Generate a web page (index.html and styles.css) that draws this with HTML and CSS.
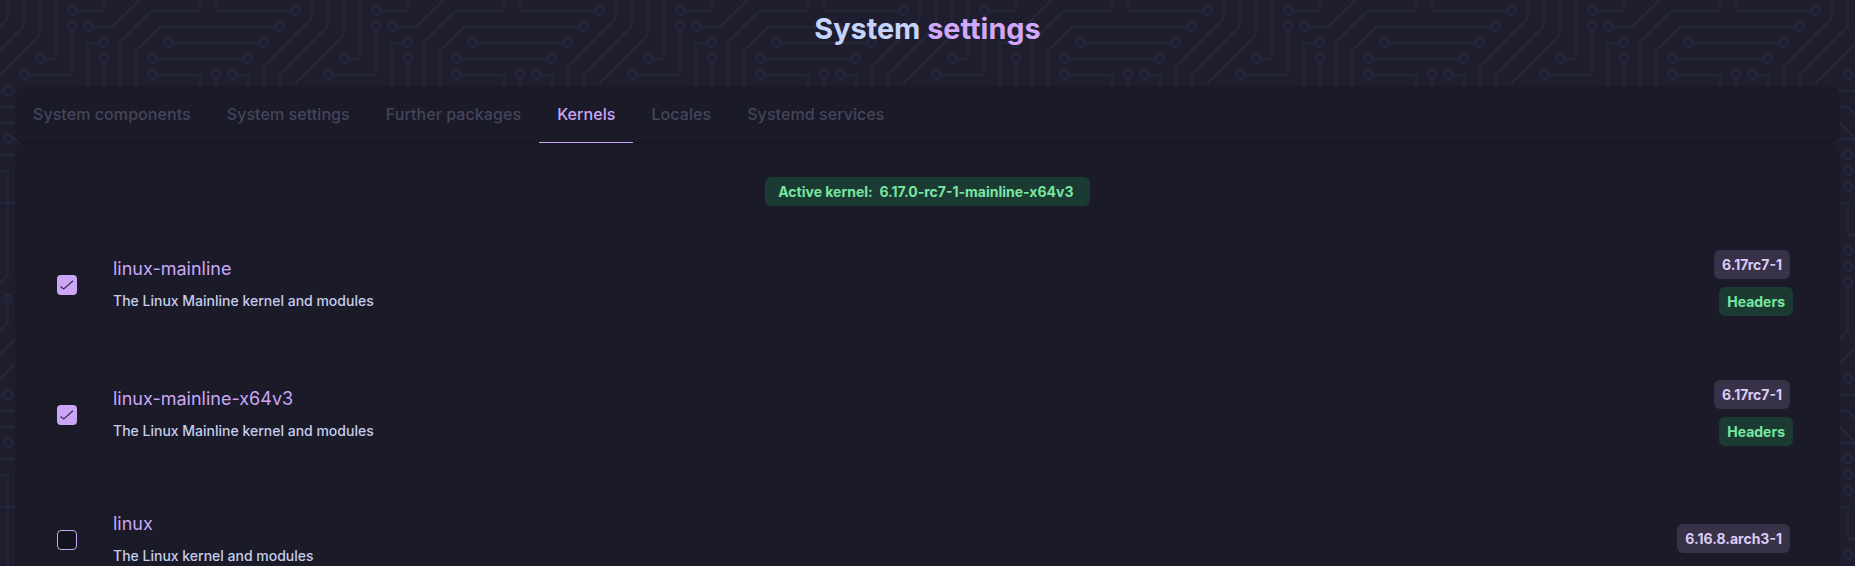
FILE: index.html
```html
<!DOCTYPE html>
<html lang="en">
<head>
  <meta charset="UTF-8" />
  <title>System settings</title>
  <meta name="viewport" content="width=device-width, initial-scale=1.0" />
  <link rel="stylesheet" href="styles.css">
</head>
<body>

<header class="page-head">
  <h1><span class="word-a">System</span> <span class="word-b">settings</span></h1>
</header>

<nav class="tabs">
  <a class="tab">System components</a>
  <a class="tab">System settings</a>
  <a class="tab">Further packages</a>
  <a class="tab active">Kernels</a>
  <a class="tab">Locales</a>
  <a class="tab">Systemd services</a>
</nav>

<main class="panel">
  <div class="active-row">
    <span class="active-kernel">Active kernel:&nbsp; 6.17.0-rc7-1-mainline-x64v3&nbsp;</span>
  </div>

  <section class="kernel">
    <span class="check on">
      <svg viewBox="0 0 20 20" width="20" height="20"><path d="M3.5 11.5 6.7 14 16 5.7" /></svg>
    </span>
    <div class="info">
      <div class="name">linux-mainline</div>
      <div class="desc">The Linux Mainline kernel and modules</div>
    </div>
    <div class="badges">
      <span class="badge version">6.17rc7-1</span>
      <span class="badge headers">Headers</span>
    </div>
  </section>

  <section class="kernel">
    <span class="check on">
      <svg viewBox="0 0 20 20" width="20" height="20"><path d="M3.5 11.5 6.7 14 16 5.7" /></svg>
    </span>
    <div class="info">
      <div class="name">linux-mainline-x64v3</div>
      <div class="desc">The Linux Mainline kernel and modules</div>
    </div>
    <div class="badges">
      <span class="badge version">6.17rc7-1</span>
      <span class="badge headers">Headers</span>
    </div>
  </section>

  <section class="kernel">
    <span class="check"></span>
    <div class="info">
      <div class="name">linux</div>
      <div class="desc">The Linux kernel and modules</div>
    </div>
    <div class="badges">
      <span class="badge version">6.16.8.arch3-1</span>
    </div>
  </section>
</main>

</body>
</html>
```
FILE: styles.css
```css
* { margin: 0; padding: 0; box-sizing: border-box; }

html, body {
  height: 566px;
  overflow: hidden;
}

body {
  font-family: Inter, "Noto Sans", sans-serif;
  color: #cdd6f4;
  background-color: #1e1e2e;
  /* circuit board tile, 304px square */
  background-image: url("data:image/svg+xml,%3Csvg xmlns='http://www.w3.org/2000/svg' width='304' height='304' fill='none' stroke='%2329293d' stroke-width='1.3'%3E%3Cpath d='M8 0V18L-12 38M312 18 264 66V304M24 0V26L-10 60M328 26 280 74V140M40 0V35L-20 95M344 35 296 83V140M56 0V59H44M76 11H104V0M72 31V75H28M92 27H112L140 0M100 43H88V140M104 63V140M120 140V42L151 11H200V0M136 140V51L160 27H276M172 43H260M156 59H244M156 75H200V90M216 79V90M236 75H248V90M216 0V11H292M12 91H40M0 107H24L60 143M0 123H16L50 157M12 139H40M0 155H20M0 171H8V275L-8 291M8 295V304M0 203H24V235H50M28 155H50M28 171H50M28 187H50M28 251H50M28 267H50M24 287V304M0 91H4' /%3E%3Ccircle cx='72' cy='11' r='4'/%3E%3Ccircle cx='72' cy='27' r='4'/%3E%3Ccircle cx='88' cy='27' r='4'/%3E%3Ccircle cx='40' cy='59' r='4'/%3E%3Ccircle cx='24' cy='75' r='4'/%3E%3Ccircle cx='104' cy='43' r='4'/%3E%3Ccircle cx='104' cy='59' r='4'/%3E%3Ccircle cx='168' cy='43' r='4'/%3E%3Ccircle cx='264' cy='43' r='4'/%3E%3Ccircle cx='152' cy='59' r='4'/%3E%3Ccircle cx='248' cy='59' r='4'/%3E%3Ccircle cx='152' cy='75' r='4'/%3E%3Ccircle cx='216' cy='75' r='4'/%3E%3Ccircle cx='232' cy='75' r='4'/%3E%3Ccircle cx='296' cy='11' r='4'/%3E%3Ccircle cx='280' cy='27' r='4'/%3E%3Ccircle cx='8' cy='91' r='4'/%3E%3Ccircle cx='8' cy='139' r='4'/%3E%3Ccircle cx='8' cy='299' r='4'/%3E%3Ccircle cx='24' cy='155' r='4'/%3E%3Ccircle cx='24' cy='171' r='4'/%3E%3Ccircle cx='24' cy='187' r='4'/%3E%3Ccircle cx='24' cy='251' r='4'/%3E%3Ccircle cx='24' cy='267' r='4'/%3E%3Ccircle cx='24' cy='283' r='4'/%3E%3C/svg%3E");
}

.page-head {
  height: 86px;
  padding-top: 11px;
  text-align: center;
}

h1 {
  font-size: 28.8px;
  line-height: 35px;
  font-weight: 700;
}

.word-a { color: #c6d4fb; }
.word-b { color: #d3a8fb; }

.tabs {
  display: flex;
  height: 57px;
  margin: 0 15px;
  background: rgba(26, 26, 40, 0.97);
  border-radius: 10px;
  border-bottom: 1px solid #12121b;
}

.tab {
  padding: 0 18px;
  line-height: 57px;
  font-size: 16px;
  font-weight: 500;
  letter-spacing: 0.07px;
  color: #45455a;
}

.tab.active {
  height: 57px;
  color: #cba6f7;
  border-bottom: 1px solid #cba6f7;
}

.panel {
  height: 500px;
  margin: 0 15px;
  padding-top: 34px;
  background: rgba(26, 26, 40, 0.97);
  border-radius: 10px;
}

.active-row {
  display: flex;
  justify-content: center;
  margin-bottom: 13px;
}

.active-kernel {
  height: 29px;
  padding: 0 13px;
  line-height: 29px;
  font-size: 14px;
  font-weight: 700;
  color: #78e6a0;
  background: #1b3a32;
  border-radius: 6px;
}

.kernel {
  display: flex;
  align-items: center;
  padding: 31px 47px 33px 42px;
}

.check {
  flex: none;
  width: 20px;
  height: 20px;
  margin: 4px 36px 0 0;
  background: #14141f;
  border: 1px solid #cba6f7;
  border-radius: 4px;
}

.check.on {
  background: #cba6f7;
  border: none;
}

.check svg {
  display: block;
  fill: none;
  stroke: #3b3350;
  stroke-width: 1.3;
}

.info {
  flex: 1;
  height: 56px;
}

.name {
  font-size: 18px;
  line-height: 27px;
  color: #cba6f7;
}

.desc {
  margin-top: 7px;
  font-size: 14px;
  line-height: 24px;
  font-weight: 500;
  color: #c5cdec;
}

.badges {
  display: flex;
  flex-direction: column;
  align-items: flex-end;
  gap: 8px;
}

.badge {
  height: 29px;
  padding: 0 8px;
  line-height: 29px;
  font-size: 14px;
  font-weight: 700;
  border-radius: 6px;
}

.version {
  margin-right: 3px;
  color: #dccbf5;
  background: #383248;
}

.headers {
  color: #78e6a0;
  background: #1b3a32;
}
```
